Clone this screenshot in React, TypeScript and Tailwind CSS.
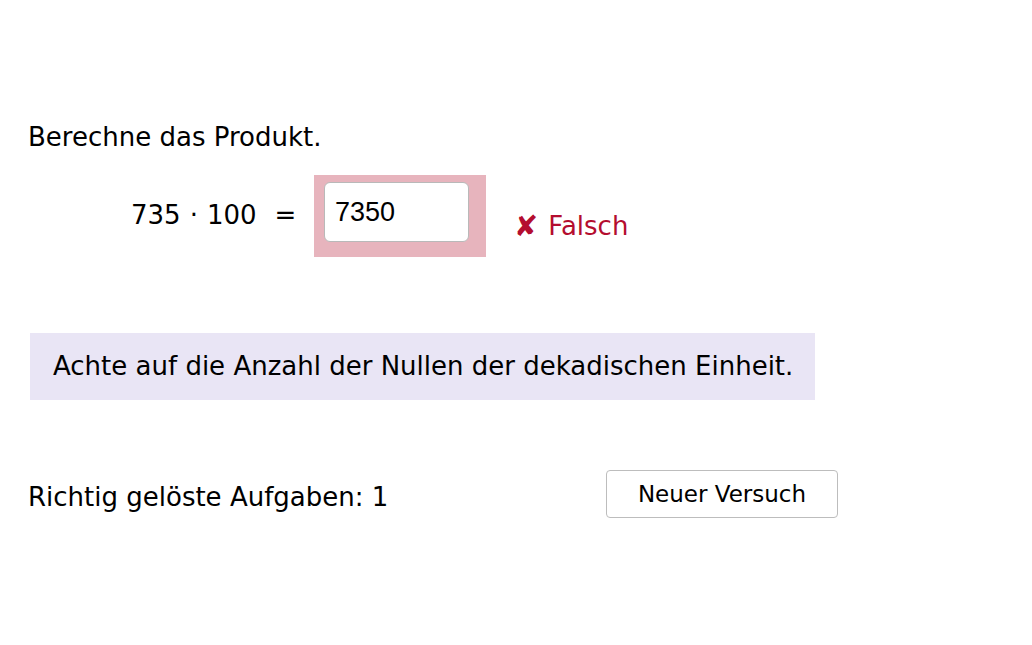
import React from "react";

export default function App() {
  return (
    <div className="w-[1032px] h-[645px] bg-white text-black overflow-hidden" style={{ fontFamily: '"DejaVu Sans", "Liberation Sans", sans-serif' }}>
      <div className="pt-[120px] pl-[28px]">
        <p className="text-[26px] leading-[34px]">Berechne das Produkt.</p>
        <div className="flex items-start mt-[21px]">
          <div className="ml-[103px] w-[183px] mt-[25px] text-[26px] leading-[30px] flex items-center">
            <span>735</span>
            <span className="mx-[9px]">·</span>
            <span>100</span>
            <span className="ml-[18px]">=</span>
          </div>
          <div className="bg-[#e7b4bd] w-[172px] h-[82px] pt-[7px] pl-[10px]">
            <div className="w-[145px] h-[60px] bg-white rounded-[6px] border border-[#b9b9b9] flex items-center pl-[10px] text-[27px]" style={{ fontFamily: '"Liberation Sans", Arial, sans-serif' }}>7350</div>
          </div>
          <div className="ml-[28px] mt-[36px] flex items-center text-[#b40d2f] text-[26px] leading-[30px]">
            <span className="text-[29px] mr-[10px]">✘</span>
            <span>Falsch</span>
          </div>
        </div>
        <div className="mt-[76px] ml-[2px] w-[785px] h-[67px] bg-[#e9e5f5] flex items-center pl-[23px] text-[26px]">
          Achte auf die Anzahl der Nullen der dekadischen Einheit.
        </div>
        <div className="mt-[70px] flex items-start">
          <span className="text-[26px] leading-[30px] w-[578px] mt-[12px]">Richtig gelöste Aufgaben: 1</span>
          <button className="w-[232px] h-[48px] border border-[#bdbdbd] rounded-[4px] bg-white text-[23px]">Neuer Versuch</button>
        </div>
      </div>
    </div>
  );
}
